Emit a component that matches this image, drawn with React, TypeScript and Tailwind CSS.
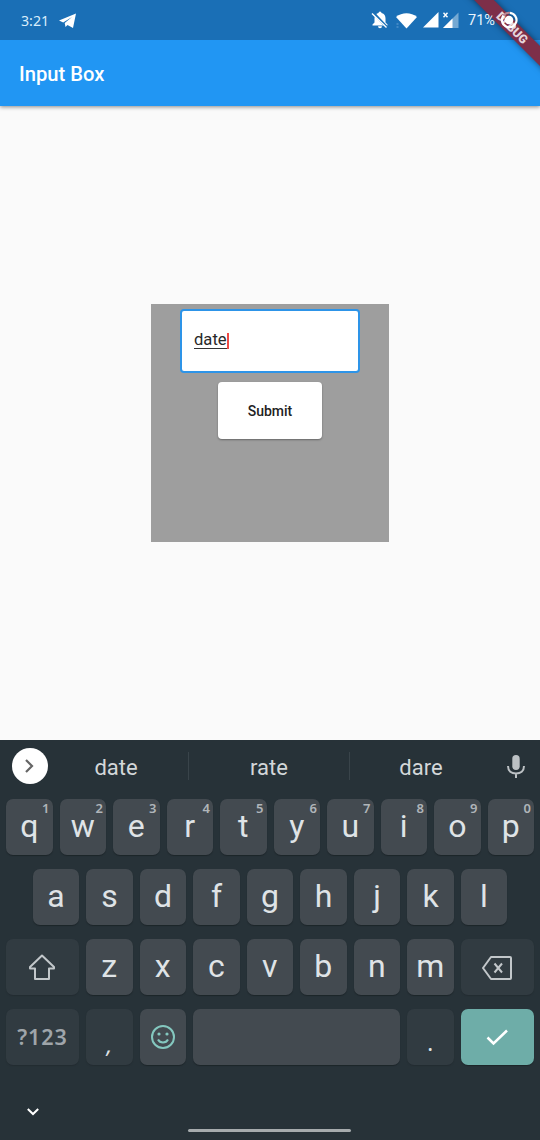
import React from 'react';

const letter = 'rounded-[7px] bg-[#434a50] shadow-[0_1px_1px_#1c2529]';
const muted = 'rounded-[7px] bg-[#313b41] shadow-[0_1px_1px_#232c31]';

function Key({ char, hint }: { char: string; hint?: string }) {
  return (
    <div className={`relative flex h-14 w-[46.5px] shrink-0 items-center justify-center ${letter}`}>
      <span className="-mt-[3px] text-[32px] leading-[56px] text-[#dfe3e6]">{char}</span>
      {hint && (
        <span className="absolute right-[3px] top-px font-['Noto_Sans'] text-[13px] font-semibold leading-4 text-[#b0b5b9]">
          {hint}
        </span>
      )}
    </div>
  );
}

function StatusBar() {
  return (
    <div className="relative h-10 bg-[#1a6fb6] text-white">
      <div className="relative z-20 flex h-10 items-center">
        <span className="ml-[21px] w-[37px] pt-px font-['Noto_Sans'] text-[14.200px] leading-10 text-[#d9edfb]">3:21</span>
        <svg className="ml-px mt-px" width="18" height="16" viewBox="0 0 18 16" fill="#fff">
          <path d="M0 7.500 17 .5 14 15 8.500 12 6.500 14 5.700 10 13 4 4.200 9.600Z" />
        </svg>
        <svg className="ml-[293px]" width="19" height="18" viewBox="0 0 19 18">
          <path d="M8.500 2a1.500 1.500 0 0 1 3 0c3 .8 4 3 4 5.500v4l2 2v1h-15v-1l2-2v-4c0-2.500 1-4.700 4-5.500ZM8 15.200h4a2 2 0 0 1-4 0Z" fill="#fff" />
          <path d="m3 1.500 14 15" stroke="#1a6fb6" strokeWidth="2.600" />
          <path d="m2 2.500 14.500 14" stroke="#fff" strokeWidth="1.400" />
        </svg>
        <svg className="ml-[6px]" width="23" height="17" viewBox="0 0 23 17">
          <path d="M1 5c6-5 15-5 21 0L11.500 16.500Z" fill="#fff" />
          <path d="M1.500 12h2M1.500 15h2" stroke="#4d91cb" strokeWidth="1.500" />
        </svg>
        <svg className="ml-[5px]" width="16" height="16" viewBox="0 0 16 16"><path d="M0 15.500 15.500 0v15.500Z" fill="#fff" /></svg>
        <svg className="ml-[3px]" width="17" height="17" viewBox="0 0 17 17">
          <path d="M1 16 16.500 .5V16Z" fill="#75a9d3" />
          <path d="M1 16 10.500 6.500V16Z" fill="#fff" />
          <path d="m1.500 .8 4 4.400m0-4.400-4 4.400" stroke="#fff" strokeWidth="1.400" />
        </svg>
        <span className="ml-[9px] w-[31px] whitespace-nowrap pt-0.5 text-[14.500px] leading-[38px] text-[#e9f4fc]">71%</span>
        <svg className="ml-px" width="18" height="18" viewBox="0 0 18 18" fill="none">
          <circle cx="9" cy="9" r="4.300" fill="#fff" />
          <path d="M10 1.800A7.300 7.300 0 1 1 3.500 4.500" stroke="#fff" strokeWidth="2.200" />
          <path d="M3.500 4.500A7.300 7.300 0 0 1 10 1.800" stroke="#b88794" strokeWidth="2.200" />
        </svg>
      </div>
    </div>
  );
}

function DebugBanner() {
  return (
    <div className="absolute right-0 top-0 z-10 h-[110px] w-[110px] overflow-hidden">
      <div className="absolute left-[16px] top-[21px] flex h-[14px] w-[132px] rotate-45 items-center justify-center bg-[#7d2f49] text-[12.200px] font-black leading-none text-[#e6d5dc] shadow-[0_0_6px_rgba(0,0,0,0.5)]">
        DEBUG
      </div>
    </div>
  );
}

export default function App() {
  const rowOne = [...'qwertyuiop'];
  return (
    <div className="relative flex h-[1140px] w-[540px] flex-col overflow-hidden bg-[#fafafa] font-[Roboto,sans-serif]">
      <StatusBar />
      <DebugBanner />
      <header className="flex h-[66px] shrink-0 items-center bg-[#2196f3] pl-[19px] pt-px shadow-[0_1px_4px_rgba(0,0,0,0.45)]">
        <h1 className="text-[20.200px] font-medium leading-6 text-white">Input Box</h1>
      </header>
      <main className="flex h-[634px] shrink-0 justify-center pt-[198.4px]">
        <div className="flex h-[237.5px] w-[238px] flex-col items-center bg-[#9e9e9e] pt-[5px]">
          <div className="flex h-[63.5px] w-[180px] shrink-0 items-center rounded-[4px] border-[2.5px] border-[#2d94e8] bg-white pl-[12px]">
            <span className="-mt-1 h-[19px] border-b border-[#333] text-[16.600px] leading-[19px] text-[#282828]">date</span>
            <span className="-mt-px h-4 w-0.5 shrink-0 bg-[#ef4b45]" />
          </div>
          <div className="mt-[9.5px] flex h-[57px] w-[104.5px] shrink-0 items-center justify-center rounded-[4px] bg-white text-[14px] font-medium leading-5 text-[#222] shadow-[0_1px_2px_rgba(0,0,0,0.35)]">
            Submit
          </div>
        </div>
      </main>
      <section className="flex h-[400px] shrink-0 flex-col bg-[#273238]">
        <div className="flex h-[59px] shrink-0 items-center pb-[7px] pl-3 text-[22px] text-[#d3d7d9]">
          <div className="flex size-[36px] items-center justify-center rounded-full bg-white">
            <svg className="mr-0.5" width="10" height="14" viewBox="0 0 10 14" fill="none" stroke="#666" strokeWidth="2.200"><path d="m2 1 6 6-6 6" /></svg>
          </div>
          <span className="w-[140px] pr-[4px] pt-[2px] text-center">date</span>
          <span className="h-7 w-px bg-[#39444a]" />
          <span className="w-[160px] pt-[2px] text-center">rate</span>
          <span className="h-7 w-px bg-[#39444a]" />
          <span className="w-[142px] pt-[2px] text-center">dare</span>
          <svg className="ml-[14px]" width="20" height="25" viewBox="0 0 20 25" fill="none">
            <rect x="6.300" y="1" width="7.400" height="15" rx="3.700" fill="#bcc1c4" />
            <path d="M2 12c0 5 3.500 7.500 8 7.500s8-2.500 8-7.500M10 19v5" stroke="#bcc1c4" strokeWidth="2" />
          </svg>
        </div>
        <div className="flex flex-col gap-[14px] px-1.5">
          <div className="flex gap-[7px]">
            {rowOne.map((c, i) => <Key key={c} char={c} hint={String((i + 1) % 10)} />)}
          </div>
          <div className="flex justify-center gap-[7px]">
            {[...'asdfghjkl'].map((c) => <Key key={c} char={c} />)}
          </div>
          <div className="flex gap-[7px]">
            <div className={`flex h-14 w-[73px] shrink-0 items-center justify-center pr-px ${muted}`}>
              <svg width="28" height="26" viewBox="0 0 28 26" fill="none" stroke="#c2c7ca" strokeWidth="2" strokeLinejoin="round">
                <path d="M14 1.500 26 13v1.500h-5V25H7V14.500H2V13Z" />
              </svg>
            </div>
            {[...'zxcvbnm'].map((c) => <Key key={c} char={c} />)}
            <div className={`flex h-14 w-[73.5px] shrink-0 items-center justify-center ${muted}`}>
              <svg className="mt-0.5" width="30" height="24" viewBox="0 0 30 24" fill="none" stroke="#c2c7ca" strokeWidth="2" strokeLinejoin="round">
                <path d="M9 1h19q1 0 1 1v20q0 1-1 1H9L1 12ZM12.500 7.500l7.500 9m0-9-7.500 9" />
              </svg>
            </div>
          </div>
          <div className="flex gap-[7px]">
            <div className={`flex h-14 w-[73px] shrink-0 items-center justify-center pt-px font-['Noto_Sans'] text-[21.500px] font-semibold tracking-[0.9px] text-[#9fa5aa] ${muted}`}>?123</div>
            <div className={`flex h-14 w-[46.5px] shrink-0 items-end justify-center pb-[8px] font-['Noto_Sans'] text-[22px] italic leading-[26px] text-[#dfe3e6] ${muted}`}>,</div>
            <div className={`flex h-14 w-[46.5px] shrink-0 items-center justify-center ${letter}`}>
              <svg width="24" height="24" viewBox="0 0 24 24" fill="none" stroke="#84c8bf" strokeWidth="2">
                <circle cx="12" cy="12" r="11" />
                <path d="M7 14.500c2 4 8 4 10 0" />
                <circle cx="8" cy="9" r="1.600" fill="#84c8bf" stroke="none" />
                <circle cx="16" cy="9" r="1.600" fill="#84c8bf" stroke="none" />
              </svg>
            </div>
            <div className={`h-14 w-[207px] shrink-0 ${letter}`} />
            <div className={`flex h-14 w-[46.5px] shrink-0 items-end justify-center pb-[10px] font-['Noto_Sans'] text-[22px] leading-[26px] text-[#dfe3e6] ${muted}`}>.</div>
            <div className="flex h-14 w-[73.5px] shrink-0 items-center justify-center rounded-[7px] bg-[#6eada8] shadow-[0_1px_1px_#1c2529]">
              <svg width="22" height="17" viewBox="0 0 22 17" fill="none" stroke="#fff" strokeWidth="2.500"><path d="m1.500 8.500 6 6L21 1.500" /></svg>
            </div>
          </div>
        </div>
        <div className="flex h-[75px] flex-col">
          <svg className="ml-[27px] mt-[43px]" width="12" height="8" viewBox="0 0 12 8" fill="none" stroke="#fff" strokeWidth="2"><path d="m.8 1 5.200 5 5.200-5" /></svg>
          <span className="ml-[188px] mt-[13px] h-[3px] w-[163px] rounded-full bg-[#a6abad]" />
        </div>
      </section>
    </div>
  );
}
